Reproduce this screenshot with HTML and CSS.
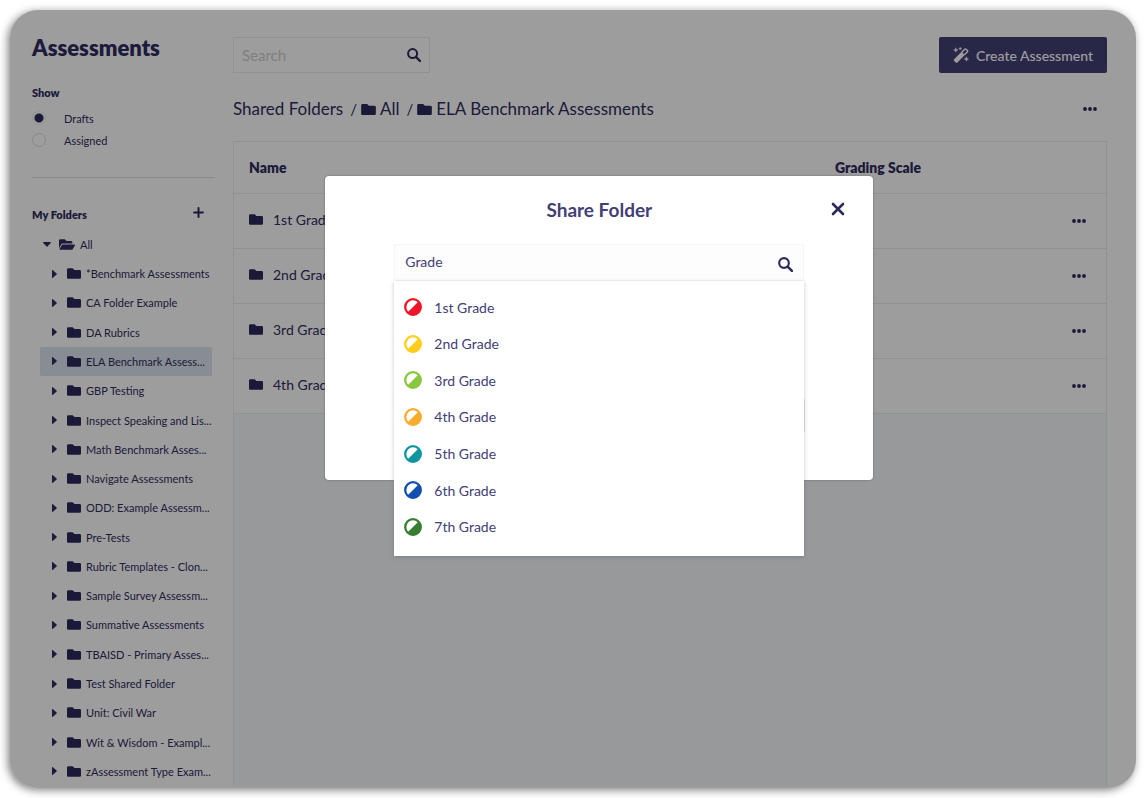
FILE: index.html
```html
<!DOCTYPE html>
<html lang="en">
<head>
<meta charset="utf-8">
<title>Assessments</title>
<link rel="stylesheet" href="styles.css">
</head>
<body>
<svg class="sprite" aria-hidden="true">
  <symbol id="folder" viewBox="0 64 512 384"><path d="M464 128H272l-64-64H48C21.500 64 0 85.500 0 112v288c0 26.500 21.500 48 48 48h416c26.500 0 48-21.500 48-48V176c0-26.500-21.500-48-48-48z"/></symbol>
  <symbol id="folder-open" viewBox="0 64 576 384"><path d="M572.700 292.100L500.300 416.200A64 64 0 0 1 445 448H45c-18.500 0-30-20.100-20.700-36.100l72.400-124.100A64 64 0 0 1 152 256h400c18.500 0 30 20.100 20.700 36.100zM152 224h328v-48c0-26.500-21.500-48-48-48H272l-64-64H48C21.500 64 0 85.500 0 112v278l69-118.400C86.200 242.200 118 224 152 224z"/></symbol>
  <symbol id="search" viewBox="0 0 14 14"><circle cx="5.600" cy="5.600" r="4.500" fill="none" stroke="currentColor" stroke-width="2"/><path d="M9 9l4 4" stroke="currentColor" stroke-width="2.400" stroke-linecap="round"/></symbol>
  <symbol id="dots" viewBox="0 0 14 4"><circle cx="2" cy="2" r="1.900"/><circle cx="7" cy="2" r="1.900"/><circle cx="12" cy="2" r="1.900"/></symbol>
  <symbol id="plus" viewBox="0 0 10 10"><path d="M5 1v8M1 5h8" stroke="currentColor" stroke-width="1.800" stroke-linecap="round"/></symbol>
  <symbol id="close" viewBox="0 0 14 14"><path d="M2 2l10 10M12 2L2 12" stroke="currentColor" stroke-width="2.600" stroke-linecap="round"/></symbol>
  <symbol id="right" viewBox="0 0 5 8"><path d="M0 .6C0 .1.500-.1.900.3l3.700 3.200c.3.300.3.700 0 1L.9 7.700C.5 8.100 0 7.900 0 7.400z"/></symbol>
  <symbol id="down" viewBox="0 0 8 5"><path d="M.6 0C.1 0-.1.500.3.900l3.200 3.700c.3.300.7.300 1 0L7.700.9C8.100.5 7.900 0 7.400 0z"/></symbol>
  <symbol id="wand" viewBox="0 0 16 16"><path d="M1.200 12.200L8.600 4.800l3.200 3.200-7.400 7.400a1.200 1.200 0 0 1-1.700 0L1.200 13.900a1.200 1.200 0 0 1 0-1.700z"/><path d="M8.800 5.200l2.900-2.900a1 1 0 0 1 1.400 0l1.200 1.200a1 1 0 0 1 0 1.400l-2.900 2.900" fill="none" stroke="currentColor" stroke-width="1.500"/><path d="M2.800.8l.6 1.600 1.600.6-1.600.6-.6 1.600-.6-1.600L.6 3l1.600-.6zM7.200.2l.4 1 1 .4-1 .4-.4 1-.4-1-1-.4 1-.4zM13.400 9.800l.6 1.600 1.600.6-1.600.6-.6 1.600-.6-1.600-1.600-.6 1.600-.6z" stroke="currentColor" stroke-width=".5"/></symbol>
  <symbol id="half" viewBox="0 0 18 18"><circle cx="9" cy="9" r="7.800" fill="none" stroke="currentColor" stroke-width="2.300"/><path d="M14.800 3.200A8.200 8.200 0 0 1 3.200 14.800z"/></symbol>
</svg>

<div class="frame">
  <aside class="sidebar">
    <h1 class="title">Assessments</h1>
    <fieldset class="filter">
      <legend class="filter-label">Show</legend>
      <label class="choice"><input class="radio" type="radio" name="show" checked>Drafts</label>
      <label class="choice"><input class="radio" type="radio" name="show">Assigned</label>
    </fieldset>
    <hr class="rule">
    <div class="folders-head">
      <h2 class="folders-title">My Folders</h2>
      <button class="icon-btn add" type="button" aria-label="Add folder"><svg class="i-plus"><use href="#plus"/></svg></button>
    </div>
    <a class="node root" href="#"><svg class="i-down"><use href="#down"/></svg><svg class="i-open"><use href="#folder-open"/></svg><span class="node-name">All</span></a>
    <nav class="tree">
      <a class="node" href="#"><svg class="i-right"><use href="#right"/></svg><svg class="i-folder"><use href="#folder"/></svg><span class="node-name">*Benchmark Assessments</span></a>
      <a class="node" href="#"><svg class="i-right"><use href="#right"/></svg><svg class="i-folder"><use href="#folder"/></svg><span class="node-name">CA Folder Example</span></a>
      <a class="node" href="#"><svg class="i-right"><use href="#right"/></svg><svg class="i-folder"><use href="#folder"/></svg><span class="node-name">DA Rubrics</span></a>
      <a class="node current" href="#"><svg class="i-right"><use href="#right"/></svg><svg class="i-folder"><use href="#folder"/></svg><span class="node-name">ELA Benchmark Assess...</span></a>
      <a class="node" href="#"><svg class="i-right"><use href="#right"/></svg><svg class="i-folder"><use href="#folder"/></svg><span class="node-name">GBP Testing</span></a>
      <a class="node" href="#"><svg class="i-right"><use href="#right"/></svg><svg class="i-folder"><use href="#folder"/></svg><span class="node-name">Inspect Speaking and Lis...</span></a>
      <a class="node" href="#"><svg class="i-right"><use href="#right"/></svg><svg class="i-folder"><use href="#folder"/></svg><span class="node-name">Math Benchmark Asses...</span></a>
      <a class="node" href="#"><svg class="i-right"><use href="#right"/></svg><svg class="i-folder"><use href="#folder"/></svg><span class="node-name">Navigate Assessments</span></a>
      <a class="node" href="#"><svg class="i-right"><use href="#right"/></svg><svg class="i-folder"><use href="#folder"/></svg><span class="node-name">ODD: Example Assessm...</span></a>
      <a class="node" href="#"><svg class="i-right"><use href="#right"/></svg><svg class="i-folder"><use href="#folder"/></svg><span class="node-name">Pre-Tests</span></a>
      <a class="node" href="#"><svg class="i-right"><use href="#right"/></svg><svg class="i-folder"><use href="#folder"/></svg><span class="node-name">Rubric Templates - Clon...</span></a>
      <a class="node" href="#"><svg class="i-right"><use href="#right"/></svg><svg class="i-folder"><use href="#folder"/></svg><span class="node-name">Sample Survey Assessm...</span></a>
      <a class="node" href="#"><svg class="i-right"><use href="#right"/></svg><svg class="i-folder"><use href="#folder"/></svg><span class="node-name">Summative Assessments</span></a>
      <a class="node" href="#"><svg class="i-right"><use href="#right"/></svg><svg class="i-folder"><use href="#folder"/></svg><span class="node-name">TBAISD - Primary Asses...</span></a>
      <a class="node" href="#"><svg class="i-right"><use href="#right"/></svg><svg class="i-folder"><use href="#folder"/></svg><span class="node-name">Test Shared Folder</span></a>
      <a class="node" href="#"><svg class="i-right"><use href="#right"/></svg><svg class="i-folder"><use href="#folder"/></svg><span class="node-name">Unit: Civil War</span></a>
      <a class="node" href="#"><svg class="i-right"><use href="#right"/></svg><svg class="i-folder"><use href="#folder"/></svg><span class="node-name">Wit &amp; Wisdom - Exampl...</span></a>
      <a class="node" href="#"><svg class="i-right"><use href="#right"/></svg><svg class="i-folder"><use href="#folder"/></svg><span class="node-name">zAssessment Type Exam...</span></a>
    </nav>
  </aside>

  <main class="main">
    <div class="toolbar">
      <div class="search">
        <input class="search-input" type="text" placeholder="Search" aria-label="Search">
        <button class="icon-btn" type="button" aria-label="Run search"><svg class="i-search"><use href="#search"/></svg></button>
      </div>
      <button class="create" type="button"><svg class="i-wand"><use href="#wand"/></svg>Create Assessment</button>
    </div>
    <div class="crumbs">
      <a class="crumb" href="#">Shared Folders</a><span class="slash">/</span>
      <a class="crumb" href="#"><svg class="i-crumb"><use href="#folder"/></svg>All</a><span class="slash">/</span>
      <a class="crumb" href="#"><svg class="i-crumb"><use href="#folder"/></svg>ELA Benchmark Assessments</a>
      <button class="icon-btn more" type="button" aria-label="Folder actions"><svg class="i-dots"><use href="#dots"/></svg></button>
    </div>
    <div class="panel">
      <table class="grid">
        <thead>
          <tr><th class="col-name">Name</th><th>Grading Scale</th><th class="col-act"></th></tr>
        </thead>
        <tbody>
          <tr><td><a class="file" href="#"><svg class="i-folder"><use href="#folder"/></svg>1st Grade</a></td><td></td><td><button class="icon-btn" type="button" aria-label="Actions"><svg class="i-dots"><use href="#dots"/></svg></button></td></tr>
          <tr><td><a class="file" href="#"><svg class="i-folder"><use href="#folder"/></svg>2nd Grade</a></td><td></td><td><button class="icon-btn" type="button" aria-label="Actions"><svg class="i-dots"><use href="#dots"/></svg></button></td></tr>
          <tr><td><a class="file" href="#"><svg class="i-folder"><use href="#folder"/></svg>3rd Grade</a></td><td></td><td><button class="icon-btn" type="button" aria-label="Actions"><svg class="i-dots"><use href="#dots"/></svg></button></td></tr>
          <tr><td><a class="file" href="#"><svg class="i-folder"><use href="#folder"/></svg>4th Grade</a></td><td></td><td><button class="icon-btn" type="button" aria-label="Actions"><svg class="i-dots"><use href="#dots"/></svg></button></td></tr>
        </tbody>
      </table>
    </div>
  </main>

  <div class="backdrop"></div>

  <section class="dialog" role="dialog" aria-labelledby="dialog-title">
    <header class="dialog-head">
      <h2 class="dialog-title" id="dialog-title">Share Folder</h2>
      <button class="icon-btn close" type="button" aria-label="Close"><svg class="i-close"><use href="#close"/></svg></button>
    </header>
    <div class="picker">
      <div class="picker-field">
        <input class="picker-input" type="text" value="Grade" aria-label="Share with">
        <button class="icon-btn" type="button" aria-label="Find"><svg class="i-find"><use href="#search"/></svg></button>
      </div>
      <ul class="options">
        <li class="option"><svg class="i-half red"><use href="#half"/></svg>1st Grade</li>
        <li class="option"><svg class="i-half yellow"><use href="#half"/></svg>2nd Grade</li>
        <li class="option"><svg class="i-half lime"><use href="#half"/></svg>3rd Grade</li>
        <li class="option"><svg class="i-half orange"><use href="#half"/></svg>4th Grade</li>
        <li class="option"><svg class="i-half teal"><use href="#half"/></svg>5th Grade</li>
        <li class="option"><svg class="i-half blue"><use href="#half"/></svg>6th Grade</li>
        <li class="option"><svg class="i-half green"><use href="#half"/></svg>7th Grade</li>
      </ul>
    </div>
    <div class="dialog-action"></div>
  </section>
</div>
</body>
</html>
```

FILE: styles.css
```css
:root {
  --ink: #302d60;
  --icon: #2c2a5c;
  --line: #e6eef3;
  --field: #ececec;
}

* { box-sizing: border-box; }

body {
  margin: 0;
  padding: 10px;
  min-height: 100vh;
  display: flex;
  background: #fff;
  color: var(--ink);
  font-family: Lato, "Liberation Sans", sans-serif;
}

h1, h2, ul, fieldset, hr { margin: 0; padding: 0; border: 0; }
a { color: inherit; text-decoration: none; }
svg { display: block; flex: none; fill: currentColor; }
.sprite { position: absolute; width: 0; height: 0; }

.icon-btn {
  display: flex;
  align-items: center;
  justify-content: center;
  padding: 0;
  border: 0;
  background: none;
  color: var(--icon);
}

.frame {
  position: relative;
  flex: 1;
  display: flex;
  gap: 18px;
  padding: 0 29px 2px 22px;
  border-radius: 28px;
  background: #fff;
  box-shadow: -2px 2px 8px rgba(0, 0, 0, .5);
}

/* Sidebar */
.sidebar {
  flex: none;
  width: 183px;
  padding-top: 22px;
  display: flex;
  flex-direction: column;
}
.title { font-size: 22px; line-height: 31px; font-weight: 800; }
.filter { margin-top: 22px; }
.filter-label {
  padding: 0;
  margin-bottom: 6px;
  font-size: 11px;
  line-height: 16px;
  font-weight: 800;
}
.choice {
  display: flex;
  align-items: center;
  gap: 18px;
  height: 22px;
  font-size: 11px;
}
.radio {
  appearance: none;
  width: 14px;
  height: 14px;
  margin: 0;
  border: 1px solid #e0e0e0;
  border-radius: 50%;
}
.radio:checked {
  border-color: #f0f0f0;
  background: radial-gradient(circle, var(--icon) 4px, transparent 5px);
}
.rule { height: 1px; margin-top: 26px; background: #dbe3e8; }
.folders-head {
  display: flex;
  align-items: center;
  justify-content: space-between;
  height: 20px;
  margin-top: 26px;
  padding-right: 11px;
}
.folders-title { font-size: 11px; font-weight: 800; }
.add { padding-bottom: 3px; }

.node {
  display: flex;
  align-items: center;
  padding-left: 12px;
  border-radius: 2px;
  font-size: 11px;
  white-space: nowrap;
}
.node-name { margin-left: 5px; }
.root { height: 29px; margin: 6px 0 0 11px; padding-left: 0; }
.tree {
  flex: 1;
  display: grid;
  grid-auto-rows: 1fr;
  margin: 0 5px 0 8px;
}
.current { background: #dde6f0; }

.i-down { width: 8px; height: 5px; margin-right: 8px; }
.i-open { width: 16px; height: 11px; }
.i-right { width: 5px; height: 8px; margin-right: 10px; }
.i-folder { width: 14px; height: 11px; color: var(--icon); }
.i-plus { width: 11px; height: 11px; }
.i-search { width: 14px; height: 14px; }
.i-wand { width: 16px; height: 16px; }
.i-crumb { width: 15px; height: 11px; color: var(--icon); }
.i-dots { width: 14px; height: 4px; }
.i-close { width: 14px; height: 14px; }
.i-find { width: 15px; height: 15px; }
.i-half { width: 18px; height: 18px; }

/* Main column */
.main {
  flex: 1;
  min-width: 0;
  padding-top: 27px;
  display: flex;
  flex-direction: column;
}
.toolbar { display: flex; justify-content: space-between; }
.search {
  display: flex;
  width: 197px;
  height: 36px;
  padding: 0 8px;
  border: 1px solid var(--field);
}
.search-input {
  flex: 1;
  min-width: 0;
  padding: 0;
  border: 0;
  background: none;
  color: var(--ink);
  font: 15px Lato, sans-serif;
}
.search-input::placeholder { color: #cfcfcf; }
.create {
  display: flex;
  align-items: center;
  gap: 7px;
  height: 36px;
  padding: 0 14px;
  border: 0;
  border-radius: 2px;
  background: #434075;
  color: #fff;
  font: 500 14px Lato, sans-serif;
}
.crumbs {
  display: flex;
  align-items: center;
  margin: 24px 0 20px;
  font-size: 17px;
  line-height: 24px;
}
.crumb { display: flex; align-items: center; gap: 4px; }
.slash { margin: 0 4px 0 7px; font-size: 15px; }
.more { margin: 0 10px 0 auto; }

.panel {
  flex: 1;
  border: 1px solid var(--line);
  border-bottom: 0;
  background: #f5f8fb;
}
.grid {
  width: 100%;
  border-collapse: collapse;
  table-layout: fixed;
  background: #fff;
}
.grid th {
  height: 51px;
  padding: 0 15px;
  border-bottom: 1px solid var(--line);
  font-size: 14px;
  font-weight: 800;
  text-align: left;
}
.grid td {
  height: 55px;
  padding: 0 15px 2px;
  border-bottom: 1px solid var(--line);
  font-size: 14px;
}
.col-name { width: 67.2%; }
.col-act { width: 56px; }
.grid td .icon-btn { margin-left: auto; }
.grid td:last-child { padding: 0 20px 0 0; }
.file { display: flex; align-items: center; gap: 10px; }

/* Dialog */
.backdrop {
  position: absolute;
  inset: 0;
  border-radius: 28px;
  background: rgba(0, 0, 0, .384);
}
.dialog {
  position: absolute;
  top: 166px;
  left: 28%;
  width: 548px;
  min-height: 304px;
  padding: 22px 69px 46px;
  border-radius: 4px;
  background: #fff;
  box-shadow: 0 0 2px rgba(0, 0, 0, .4);
}
.dialog-head {
  display: grid;
  place-items: center;
  height: 24px;
}
.dialog-title {
  grid-area: 1 / 1;
  color: #434075;
  font-size: 19px;
  line-height: 24px;
  font-weight: 700;
}
.close {
  grid-area: 1 / 1;
  justify-self: end;
  margin: 0 -41px 2px 0;
}
.picker { position: relative; margin-top: 22px; }
.picker-field {
  display: flex;
  height: 37px;
  padding: 0 10px;
  border: 1px solid #f5f6f8;
  background: #fdfdfd;
}
.picker-input {
  flex: 1;
  min-width: 0;
  padding: 0 0 2px;
  border: 0;
  background: none;
  color: #434075;
  font: 14px Lato, sans-serif;
}
.picker-field .icon-btn { padding-top: 4px; }
.options {
  position: absolute;
  z-index: 1;
  top: 100%;
  left: 0;
  right: 0;
  height: 275px;
  padding: 8px 10px 11px;
  display: grid;
  grid-auto-rows: 1fr;
  list-style: none;
  background: #fff;
  box-shadow: 0 1px 4px rgba(60, 70, 110, .3);
}
.option {
  display: flex;
  align-items: center;
  gap: 12px;
  color: #434075;
  font-size: 14px;
}
.dialog-action {
  height: 35px;
  margin: 117px -1px 0 auto;
  width: 96px;
  border-radius: 2px;
  background: #e2e2ee;
}

.red { color: #ed1528; }
.yellow { color: #ffcd1a; }
.lime { color: #8ac741; }
.orange { color: #f9ac2c; }
.teal { color: #0f95a0; }
.blue { color: #124fb0; }
.green { color: #377d32; }
```
